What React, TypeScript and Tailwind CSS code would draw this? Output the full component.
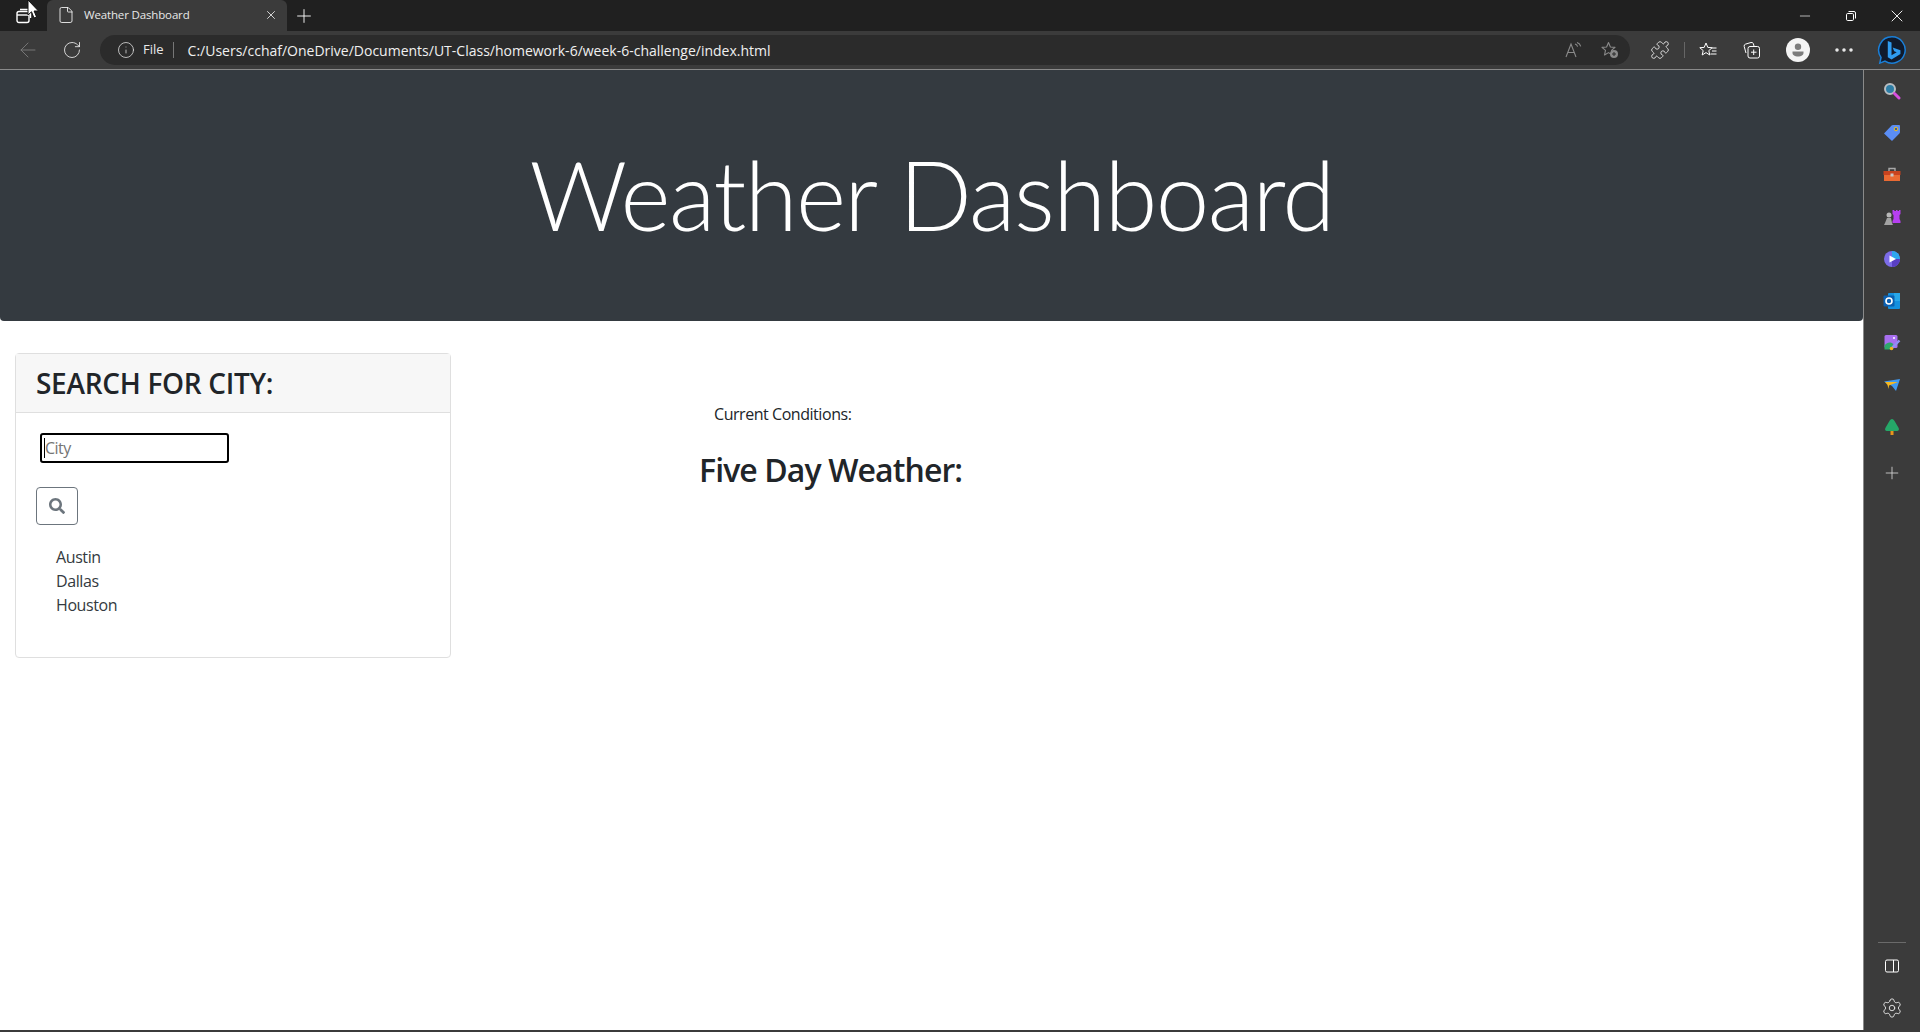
import React from 'react'
import { ArrowLeft, RotateCw, Info, File, X, Plus, Minus, Settings, Puzzle, Ellipsis } from 'lucide-react'
import { FaSearch } from 'react-icons/fa'

const uiFont = "font-['Open_Sans',sans-serif]"

function TabsIcon() {
  return (
    <svg width="16" height="16" viewBox="0 0 16 16" fill="none" stroke="#fff" strokeWidth="1.4">
      <rect x="1" y="3.5" width="12" height="11" rx="2" />
      <path d="M1 7h12" />
      <path d="M4 1.5h8a2.5 2.5 0 0 1 2.5 2.5v6" />
    </svg>
  )
}

function Cursor() {
  return (
    <svg className="absolute left-[27px] top-0" width="12" height="20" viewBox="0 0 12 20">
      <path d="M1 0v15l3.5-3.2L7 18l2.6-1-2.5-6H11.5z" fill="#fff" stroke="#111" strokeWidth="1" />
    </svg>
  )
}

function RestoreIcon() {
  return (
    <svg width="10" height="10" viewBox="0 0 10 10" fill="none" stroke="#fff" strokeWidth="1">
      <rect x="0.5" y="2.5" width="7" height="7" rx="1.2" />
      <path d="M2.5 .5h5.5a1.5 1.5 0 0 1 1.5 1.5v5.5" />
    </svg>
  )
}

function ReadAloudIcon() {
  return (
    <svg width="18" height="16" viewBox="0 0 18 16" fill="none" stroke="#8a8a8a" strokeWidth="1.1">
      <path d="M1 15 6 2l5 13M2.8 10.5h6.4" />
      <path d="M10 2c1.4.4 2.2 1.3 2.6 2.6M12 .5c2 .6 3.2 1.9 3.7 3.8" />
    </svg>
  )
}

function FavAddIcon() {
  return (
    <svg width="18" height="18" viewBox="0 0 18 18" fill="none">
      <path d="M7.5 1.5 9.4 6l4.6.4-3.5 3 1 4.6-4-2.4-4 2.4 1-4.6-3.5-3L5.6 6z" stroke="#8a8a8a" strokeWidth="1.1" strokeLinejoin="round" />
      <circle cx="13" cy="13" r="4" fill="#8a8a8a" />
      <path d="M13 11v4M11 13h4" stroke="#2b2b2b" strokeWidth="1" />
    </svg>
  )
}

function FavoritesIcon() {
  return (
    <svg width="18" height="16" viewBox="0 0 18 16" fill="none" stroke="#fff" strokeWidth="1">
      <path d="M7 1 8.800 5.400l4.400.3-3.400 2.900 1 4.400L7 10.600 3.200 13l1-4.400L.8 5.700l4.400-.3z" strokeLinejoin="round" />
      <path d="M13 6h4.500M13 9h4.500M11.500 12h6" />
    </svg>
  )
}

function CollectionsIcon() {
  return (
    <svg width="18" height="18" viewBox="0 0 18 18" fill="none" stroke="#fff" strokeWidth="1">
      <path d="M3 12 1.200 5.500a2 2 0 0 1 1.400-2.400L8 1.500a2 2 0 0 1 2.400 1.300L11 5" />
      <rect x="5" y="5.500" width="11.500" height="11.500" rx="2" />
      <path d="M10.700 8.500v5.500M8 11.200h5.500" />
    </svg>
  )
}

function ProfileIcon() {
  return (
    <div className="flex h-6 w-6 items-center justify-center rounded-full bg-[#f4f4f4]">
      <svg width="16" height="16" viewBox="0 0 16 16" fill="#7c7c7c">
        <circle cx="8" cy="4.800" r="3.200" />
        <path d="M2.500 9.500h11v1.500c0 2.200-2.500 3.500-5.500 3.500S2.500 13.200 2.500 11z" />
      </svg>
    </div>
  )
}

function BingIcon() {
  return (
    <svg width="30" height="30" viewBox="0 0 32 32" fill="none">
      <path d="M16 2a14 14 0 1 1-7.500 25.800L3 30l1.300-6A14 14 0 0 1 16 2z" fill="#101a2c" stroke="#1a7fd8" strokeWidth="1.600" />
      <path d="M11.500 6.500l4 1.500v13.500l5.500-3-2.700-1.300-1.600-4 8.300 3v4l-9.500 5.800-4-2.300z" fill="#2f9bf0" />
    </svg>
  )
}

function SidebarIcons() {
  return (
    <div className="flex flex-col items-center gap-[24px]">
      <svg width="18" height="18" viewBox="0 0 18 18">
        <circle cx="7" cy="7" r="5" fill="#2e7ea6" stroke="#b9bec2" strokeWidth="2" />
        <path d="M11.500 11.500 16 16" stroke="#d84fe0" strokeWidth="3" strokeLinecap="round" />
      </svg>
      <svg width="18" height="18" viewBox="0 0 18 18">
        <path d="M10 1h6a1 1 0 0 1 1 1v6a2 2 0 0 1-.6 1.400L9 17 1 9.500 8.600 1.600A2 2 0 0 1 10 1z" fill="#5b8ef5" />
        <circle cx="13" cy="5" r="1.800" fill="#3a5ca8" stroke="#f2c21a" strokeWidth="1" />
      </svg>
      <svg width="18" height="18" viewBox="0 0 18 18">
        <path d="M6 5V2.500h6V5" fill="none" stroke="#a9a9a9" strokeWidth="1.400" />
        <rect x="0.500" y="5" width="17" height="4" fill="#c8431f" />
        <rect x="1" y="9" width="16" height="6" fill="#ea6a33" />
        <rect x="7.500" y="7.500" width="3" height="3" fill="#c9c9c9" />
      </svg>
      <svg width="18" height="18" viewBox="0 0 18 18">
        <path d="M9.500 2h1.800v1H13V2h1.500v1H16V2h1.500v4l-1 1v4l1 2v2h-8v-2l1-2V7l-1-1z" fill="#b63ff0" />
        <circle cx="6" cy="7" r="2.500" fill="#b8b8b8" />
        <path d="M4 10h4l1 5 1 2H1l1-2z" fill="#a3a3a3" />
      </svg>
      <svg width="18" height="18" viewBox="0 0 18 18">
        <circle cx="9" cy="9" r="8" fill="#7c6ce8" />
        <path d="M9 1a8 8 0 0 1 8 8H9z" fill="#2fa7ee" />
        <path d="M9 17a8 8 0 0 0 8-8H9z" fill="#5a3fc4" />
        <path d="M6.500 5.500 13 9l-6.500 3.500z" fill="#fff" />
      </svg>
      <svg width="18" height="18" viewBox="0 0 18 18">
        <rect x="5" y="1" width="12" height="16" rx="1" fill="#1490df" />
        <rect x="11" y="1" width="6" height="8" fill="#28a8ea" />
        <rect x="0.500" y="3.500" width="11" height="11" rx="1" fill="#0a5fb0" />
        <circle cx="6" cy="9" r="3" fill="none" stroke="#fff" strokeWidth="1.600" />
      </svg>
      <svg width="18" height="18" viewBox="0 0 18 18">
        <rect x="1.500" y="1" width="13" height="13" rx="1.500" fill="#a86ff0" />
        <path d="M1.500 12c1.500-3.500 6-5 9-2l-3 5.500H1.500z" fill="#2ea86b" />
        <path d="M8 15l8.500-8.500" stroke="#8f8ff5" strokeWidth="2.400" />
        <circle cx="8.500" cy="14.500" r="1.800" fill="#efb21c" />
        <circle cx="11" cy="4" r="1" fill="#fff" />
      </svg>
      <svg width="18" height="18" viewBox="0 0 18 18">
        <path d="M1 5.500 17 3 13 15 9 10z" fill="#3f9af2" />
        <path d="M2 6h13L6 9.500 5.500 13 4.500 9z" fill="#f5b821" />
      </svg>
      <svg width="18" height="18" viewBox="0 0 18 18">
        <path d="M9 1c1.200 0 2 1 2.700 2.300l3.800 6.500c1 1.700.3 3.200-1.500 3.200H4c-1.800 0-2.500-1.500-1.500-3.200l3.800-6.500C7 2 7.800 1 9 1z" fill="#25a868" />
        <rect x="7.500" y="13" width="3" height="4" fill="#e8951c" />
      </svg>
      <Plus className="mt-[3px]" size={20} strokeWidth={1} color="#d8d8d8" />
    </div>
  )
}

export default function App() {
  return (
    <div className={`flex h-screen w-full flex-col overflow-hidden bg-[#3b3b3b] ${uiFont}`}>
      {/* Tab strip */}
      <div className="relative flex h-[31px] shrink-0 items-center bg-[#202020]">
        <div className="flex h-full w-[47px] items-center justify-center">
          <TabsIcon />
        </div>
        <Cursor />
        <div className="flex h-full w-[240px] items-center rounded-t-md bg-[#3b3b3b] pb-[1px] pl-[10px] pr-[9px]">
          <File size={18} strokeWidth={1.1} color="#fff" />
          <span className="ml-[9px] flex-1 pb-[1px] text-[11.500px] tracking-[-0.150px] text-[#e8e8e8]">Weather Dashboard</span>
          <X size={14} strokeWidth={1.500} color="#e8e8e8" />
        </div>
        <div className="ml-[6px] flex w-[22px] items-center justify-center">
          <Plus size={22} strokeWidth={1} color="#fff" />
        </div>
        <div className="ml-auto flex items-center pr-[13px]">
          <Minus size={16} strokeWidth={1} color="#fff" />
          <span className="ml-[33px]"><RestoreIcon /></span>
          <span className="ml-[31px]"><X size={20} strokeWidth={1.100} color="#fff" /></span>
        </div>
      </div>

      {/* Address bar */}
      <div className="flex h-[39px] shrink-0 items-center border-b border-[#8a8a8a] bg-[#3b3b3b]">
        <div className="flex w-[52px] justify-center pl-[4px]">
          <ArrowLeft size={24} strokeWidth={0.9} color="#7d7d7d" />
        </div>
        <div className="flex h-[29px] w-[40px] items-center justify-center">
          <RotateCw size={20} strokeWidth={1} color="#f0f0f0" />
        </div>
        <div className="ml-[8px] flex h-[30px] w-[1530px] items-center rounded-full bg-[#2b2b2b] pl-[17px] pr-[11px]">
          <Info size={18} strokeWidth={1} color="#e8e8e8" />
          <span className="ml-[8px] text-[13px] text-[#e8e8e8]">File</span>
          <span className="ml-[9px] h-[16px] w-px bg-[#777]" />
          <span className="ml-[14px] text-[14px] text-[#f0f0f0]">C:/Users/cchaf/OneDrive/Documents/UT-Class/homework-6/week-6-challenge/index.html</span>
          <div className="ml-auto flex items-center gap-[18px]">
            <ReadAloudIcon />
            <FavAddIcon />
          </div>
        </div>
        <div className="ml-[20px] flex items-center">
          <Puzzle size={20} strokeWidth={1} color="#f0f0f0" />
          <span className="mx-[14px] h-[16px] w-px bg-[#666]" />
          <FavoritesIcon />
          <span className="ml-[26px]"><CollectionsIcon /></span>
          <span className="ml-[25px]"><ProfileIcon /></span>
          <span className="ml-[22px]"><Ellipsis size={24} strokeWidth={1.500} color="#f0f0f0" /></span>
          <span className="ml-[21px]"><BingIcon /></span>
        </div>
      </div>

      <div className="flex min-h-0 flex-1">
        {/* Page */}
        <main className="min-w-0 flex-1 bg-white">
          <header className="flex h-[251px] items-start justify-center rounded-b-[4px] bg-[#343a40] pt-[52px]">
            <h1 className="font-['Lato',sans-serif] text-[96px] font-light leading-[144px] tracking-[-1.600px] text-white">Weather Dashboard</h1>
          </header>
          <div className="flex items-start">
            <section className="ml-[15px] mt-[32px] h-[305px] w-[436px] rounded-[4px] border border-[#dfdfdf]">
              <div className="flex h-[59px] items-center border-b border-[#dfdfdf] bg-[#f7f7f7] pl-[20px]">
                <h2 className="text-[28px] font-semibold leading-[34px] tracking-[-0.300px] text-[#212529]">SEARCH FOR CITY:</h2>
              </div>
              <div className="pl-[20px] pt-[20px]">
                <div className="relative ml-[4px] flex h-[30px] w-[189px] items-center rounded-[3px] border-2 border-black pl-[2px]">
                  <span className="h-[20px] w-px bg-black" />
                  <input placeholder="City" className="w-full bg-transparent text-[16px] tracking-[-0.500px] text-[#212529] outline-none placeholder:text-[#757575]" />
                </div>
                <button className="mt-[24px] flex h-[38px] w-[42px] items-center justify-center rounded-[4px] border border-[#6c757d]">
                  <FaSearch size={16} color="#6c757d" />
                </button>
                <ul className="ml-[20px] mt-[20px] text-[16px] leading-[24px] tracking-[-0.400px] text-[#343a40]">
                  <li>Austin</li>
                  <li>Dallas</li>
                  <li>Houston</li>
                </ul>
              </div>
            </section>
            <section className="ml-[248px] mt-[81px]">
              <p className="ml-[15px] text-[16px] leading-[24px] tracking-[-0.450px] text-[#212529]">Current Conditions:</p>
              <h2 className="mt-[25px] text-[32px] font-semibold leading-[38px] tracking-[-0.900px] text-[#212529]">Five Day Weather:</h2>
            </section>
          </div>
        </main>

        {/* Edge sidebar */}
        <aside className="flex w-[57px] shrink-0 flex-col items-center border-l border-[#8a8a8a] bg-[#3b3b3b] pb-[11px] pt-[12px]">
          <SidebarIcons />
          <div className="mt-auto h-px w-[28px] bg-[#6a6a6a]" />
          <svg className="mt-[16px]" width="14" height="14" viewBox="0 0 14 14" fill="none" stroke="#fff" strokeWidth="1">
            <rect x="0.500" y="1" width="13" height="12" rx="1.500" />
            <path d="M8.500 1v12" />
          </svg>
          <span className="mt-[24px] flex"><Settings size={22} strokeWidth={1} color="#e8e8e8" /></span>
        </aside>
      </div>
      <div className="h-[2px] shrink-0 bg-[#3b3b3b]" />
    </div>
  )
}
